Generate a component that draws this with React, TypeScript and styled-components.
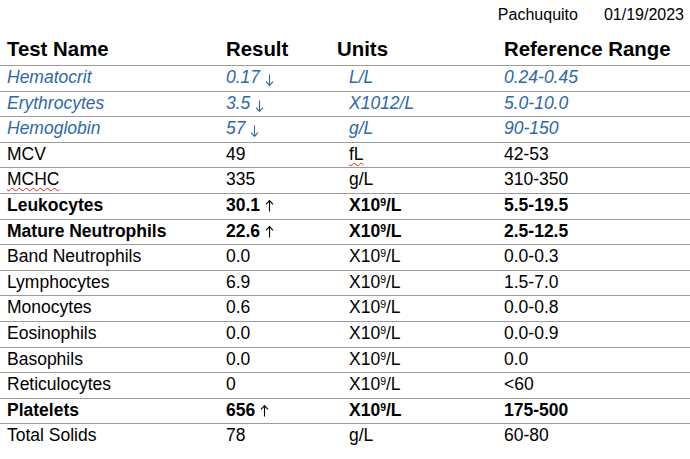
import React from 'react'
import styled, { createGlobalStyle, css } from 'styled-components'

const GlobalStyle = createGlobalStyle`
  html, body {
    margin: 0;
    padding: 0;
    background: #fff;
  }
  body {
    font-family: 'Liberation Sans', Arial, sans-serif;
    color: #000;
  }
`

type Tone = 'plain' | 'bold' | 'flag'

const Page = styled.div`
  width: 690px;
  padding-top: 6px;
`

const Meta = styled.div`
  display: flex;
  justify-content: flex-end;
  gap: 26px;
  padding-right: 6px;
  font-size: 16px;
  line-height: 18px;
`

const Table = styled.div`
  margin-top: 13px;
`

const Grid = css`
  display: grid;
  grid-template-columns: 219px 123px 155px 1fr;
  padding-left: 7px;
  border-bottom: 1px solid #9c9c9c;
`

const HeadRow = styled.div`
  ${Grid}
  font-size: 20.4px;
  font-weight: 700;
  line-height: 24px;
  padding-bottom: 4px;
`

const Row = styled.div<{ $tone: Tone }>`
  ${Grid}
  font-size: 17.5px;
  line-height: 20px;
  padding-top: 1px;
  padding-bottom: 3.6px;
  white-space: nowrap;
  ${({ $tone }) => $tone === 'bold' && css`font-weight: 700;`}
  ${({ $tone }) =>
    $tone === 'flag' &&
    css`
      color: #2f68aa;
      font-style: italic;
    `}
  &:last-child {
    border-bottom: none;
  }
`

const Cell = styled.div<{ $shift?: number }>`
  margin-left: ${({ $shift }) => $shift ?? 0}px;
`

const ArrowIcon = styled.svg<{ $drop: number }>`
  width: 9px;
  height: 12px;
  margin-left: 5px;
  vertical-align: ${({ $drop }) => -$drop}px;
`

const Spell = styled.span`
  text-decoration: underline wavy #e0201c;
  text-decoration-thickness: 1px;
  text-underline-offset: 2px;
`

const Sup = styled.sup`
  font-size: 0.6em;
  line-height: 0;
  vertical-align: 0.5em;
`

function Arrow({ dir }: { dir: 'up' | 'down' }) {
  const d = dir === 'down' ? 'M4.5 0.5V11.2M1 7.6L4.5 11.4L8 7.6' : 'M4.5 11.5V0.8M1 4.4L4.5 0.6L8 4.4'
  return (
    <ArrowIcon $drop={dir === 'down' ? 3 : 1} viewBox="0 0 9 12" fill="none">
      <path d={d} stroke="currentColor" strokeWidth="1.1" />
    </ArrowIcon>
  )
}

const giga = (
  <>
    X10<Sup>9</Sup>/L
  </>
)

type Test = {
  name: React.ReactNode
  result: string
  arrow?: 'up' | 'down'
  units: React.ReactNode
  range: string
  tone: Tone
}

const tests: Test[] = [
  { name: 'Hematocrit', result: '0.17', arrow: 'down', units: 'L/L', range: '0.24-0.45', tone: 'flag' },
  { name: 'Erythrocytes', result: '3.5', arrow: 'down', units: 'X1012/L', range: '5.0-10.0', tone: 'flag' },
  { name: 'Hemoglobin', result: '57', arrow: 'down', units: 'g/L', range: '90-150', tone: 'flag' },
  { name: 'MCV', result: '49', units: <Spell>fL</Spell>, range: '42-53', tone: 'plain' },
  { name: <Spell>MCHC</Spell>, result: '335', units: 'g/L', range: '310-350', tone: 'plain' },
  { name: 'Leukocytes', result: '30.1', arrow: 'up', units: giga, range: '5.5-19.5', tone: 'bold' },
  { name: 'Mature Neutrophils', result: '22.6', arrow: 'up', units: giga, range: '2.5-12.5', tone: 'bold' },
  { name: 'Band Neutrophils', result: '0.0', units: giga, range: '0.0-0.3', tone: 'plain' },
  { name: 'Lymphocytes', result: '6.9', units: giga, range: '1.5-7.0', tone: 'plain' },
  { name: 'Monocytes', result: '0.6', units: giga, range: '0.0-0.8', tone: 'plain' },
  { name: 'Eosinophils', result: '0.0', units: giga, range: '0.0-0.9', tone: 'plain' },
  { name: 'Basophils', result: '0.0', units: giga, range: '0.0', tone: 'plain' },
  { name: 'Reticulocytes', result: '0', units: giga, range: '<60', tone: 'plain' },
  { name: 'Platelets', result: '656', arrow: 'up', units: giga, range: '175-500', tone: 'bold' },
  { name: 'Total Solids', result: '78', units: 'g/L', range: '60-80', tone: 'plain' },
]

export default function App() {
  return (
    <Page>
      <GlobalStyle />
      <Meta>
        <span>Pachuquito</span>
        <span>01/19/2023</span>
      </Meta>
      <Table>
        <HeadRow>
          <Cell>Test Name</Cell>
          <Cell>Result</Cell>
          <Cell $shift={-12}>Units</Cell>
          <Cell>Reference Range</Cell>
        </HeadRow>
        {tests.map((t, i) => (
          <Row key={i} $tone={t.tone}>
            <Cell>{t.name}</Cell>
            <Cell>
              {t.result}
              {t.arrow && <Arrow dir={t.arrow} />}
            </Cell>
            <Cell>{t.units}</Cell>
            <Cell>{t.range}</Cell>
          </Row>
        ))}
      </Table>
    </Page>
  )
}
